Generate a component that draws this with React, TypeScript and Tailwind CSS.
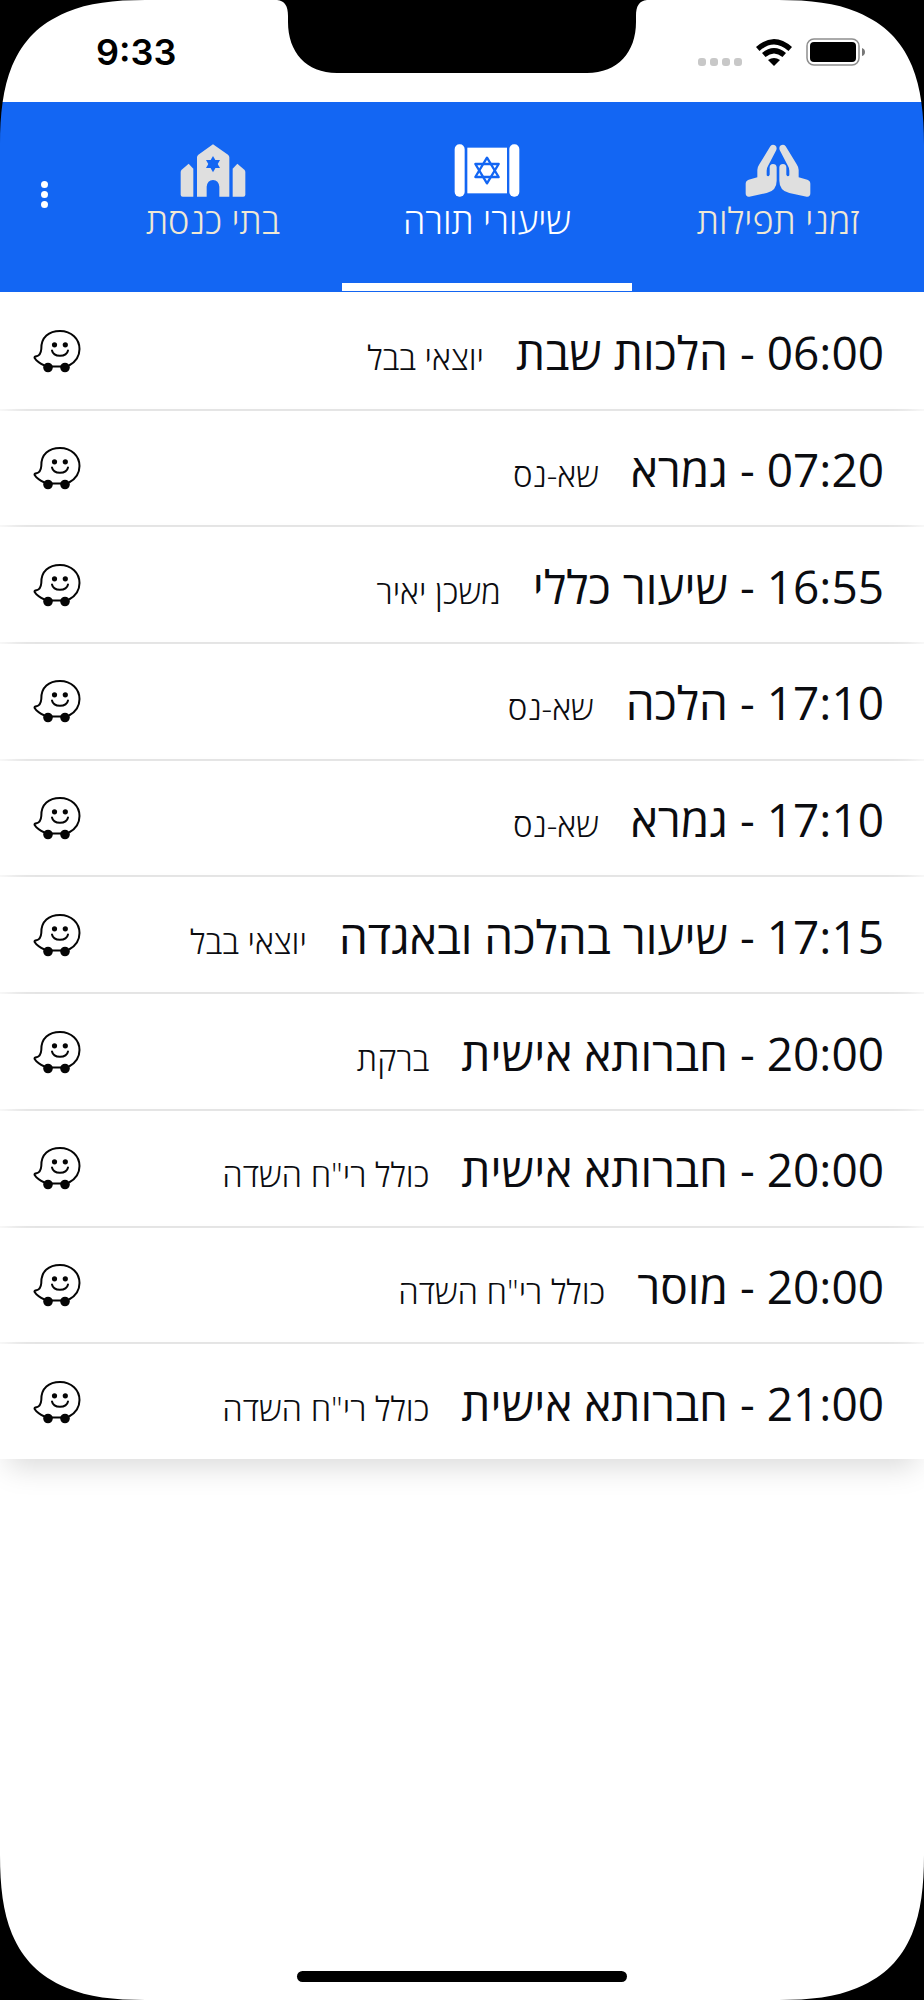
import { useState } from "react";

interface Lesson {
  time: string;
  title: string;
  place: string;
}

const lessons: Lesson[] = [
  { time: "06:00", title: "הלכות שבת", place: "יוצאי בבל" },
  { time: "07:20", title: "גמרא", place: "שא-נס" },
  { time: "16:55", title: "שיעור כללי", place: "משכן יאיר" },
  { time: "17:10", title: "הלכה", place: "שא-נס" },
  { time: "17:10", title: "גמרא", place: "שא-נס" },
  { time: "17:15", title: "שיעור בהלכה ובאגדה", place: "יוצאי בבל" },
  { time: "20:00", title: "חברותא אישית", place: "ברקת" },
  { time: "20:00", title: "חברותא אישית", place: 'כולל רי"ח השדה' },
  { time: "20:00", title: "מוסר", place: 'כולל רי"ח השדה' },
  { time: "21:00", title: "חברותא אישית", place: 'כולל רי"ח השדה' },
];

const handPath =
  "M268 49L235 103Q230 110 229 120V142L203 149Q194 152 194 161V190Q194 201 205 200L257 189Q287 182 287 152V112Q286 102 276 102Q266 103 266 112V134Q262 142 257 136V122Q257 114 261 108L286 60Q289 50 282 46Q274 42 268 49Z";

function PrayerIcon() {
  return (
    <svg viewBox="192 42 198 159" className="h-[53px] w-[66px] fill-[#dfdfdf]" aria-hidden="true">
      <path d={handPath} />
      <path d={handPath} transform="translate(582 0) scale(-1 1)" />
    </svg>
  );
}

function TorahIcon() {
  return (
    <svg viewBox="192 42 198 159" className="h-[53px] w-[66px] fill-white" aria-hidden="true">
      <rect x="194" y="43" width="30" height="157" rx="14" />
      <rect x="358" y="43" width="30" height="157" rx="14" />
      <rect x="232" y="53" width="119" height="137" />
      <g fill="none" stroke="#1366f3" strokeWidth="7" strokeLinejoin="round">
        <path d="M291 83L326 141H256Z" />
        <path d="M291 160L256 102H326Z" />
      </g>
    </svg>
  );
}

function SynagogueIcon() {
  return (
    <svg viewBox="150 42 198 159" className="h-[53px] w-[66px] fill-[#dfdfdf]" aria-hidden="true">
      <path d="M176 101L190 116V200H158Q152 200 152 194V126Q152 122 155 119Z" />
      <path d="M322 101L308 116V200H340Q346 200 346 194V126Q346 122 343 119Z" />
      <path d="M249 43L294 74Q298 77 298 82V200H268V170Q266 151 249 150Q232 151 230 170V200H201V82Q201 77 205 74Z" />
      <g className="fill-[#1366f3]">
        <path d="M249 78L270 114H228Z" />
        <path d="M249 127L228 90H270Z" />
      </g>
    </svg>
  );
}

function WazeIcon() {
  return (
    <svg viewBox="13 10 48 44" className="h-[44px] w-[48px]" fill="none" stroke="#050505" strokeWidth="2" aria-hidden="true">
      <path
        d="M24.5 46.5C20 44.500 16.500 42 14.600 39C14.200 38 15 37.500 16.500 37.200C20 36.500 21 34 21.300 30C21 18 29 11.900 40 11.900C51.500 11.900 59.500 20 59.500 30C59.500 37.500 55.500 43 49 46.500M32 47.500H41"
        strokeLinejoin="round"
      />
      <path d="M32 31.500C33.500 38.500 46.500 38.500 48 31.500" strokeLinecap="round" />
      <g fill="#050505" stroke="none">
        <circle cx="28" cy="48.500" r="4.800" />
        <circle cx="45" cy="48.500" r="4.800" />
        <circle cx="34.500" cy="25.800" r="2.600" />
        <circle cx="45.300" cy="25.800" r="2.600" />
      </g>
    </svg>
  );
}

const tabs = [
  { id: "prayers", label: "זמני תפילות", Icon: PrayerIcon },
  { id: "lessons", label: "שיעורי תורה", Icon: TorahIcon },
  { id: "synagogues", label: "בתי כנסת", Icon: SynagogueIcon },
];

const corners = [
  "top-0 left-0",
  "top-0 right-0 -scale-x-100",
  "bottom-0 left-0 -scale-y-100",
  "bottom-0 right-0 -scale-100",
];

// Black phone bezel that lies over the screen: rounded corners and the notch
function Bezel() {
  return (
    <div className="pointer-events-none absolute inset-0 z-20" aria-hidden="true">
      {corners.map((place) => (
        <svg key={place} viewBox="0 0 150 150" className={`absolute size-[150px] ${place}`}>
          <path d="M0 0H145C114 0 88 3 67 12C51 19 42 25 33 34C25 42 18 52 12 66C3 88 0 114 0 145Z" />
        </svg>
      ))}
      <svg viewBox="0 0 370 73" className="absolute top-0 left-1/2 h-[73px] w-[370px] -translate-x-1/2">
        <path d="M0 0C8 1 11 6 11 16V22C11 52 29 73 60 73H310C341 73 359 52 359 22V16C359 6 362 1 370 0Z" />
      </svg>
    </div>
  );
}

function StatusBar() {
  return (
    <div dir="ltr" className="flex h-[102px] items-center justify-between pt-0.5 pr-[58px] pl-[96px]">
      <span className="font-['Inter',sans-serif] text-[36px] leading-10 font-semibold text-black">9:33</span>
      <div className="flex items-center gap-3.5" aria-hidden="true">
        <div className="flex gap-1 pt-5">
          <i className="size-2 rounded-[3px] bg-[#c8c8c8]" />
          <i className="size-2 rounded-[3px] bg-[#c8c8c8]" />
          <i className="size-2 rounded-[3px] bg-[#c8c8c8]" />
          <i className="size-2 rounded-[3px] bg-[#c8c8c8]" />
        </div>
        <svg viewBox="0 0 36 27" className="h-[27px] w-[36px]">
          <path d="M0 8Q18-8 36 8L32.500 12Q18-1 3.500 12Z" />
          <path d="M6 14Q18 4 30 14L26.500 18Q18 11 9.500 18Z" />
          <path d="M12 21Q18 17 24 21L18 27Z" />
        </svg>
        <svg viewBox="0 0 60 28" className="h-[28px] w-[60px]">
          <rect x="1" y="1" width="52" height="26" rx="7" fill="none" stroke="#8e8e8e" strokeWidth="1.500" />
          <rect x="4" y="4" width="46" height="20" rx="4" />
          <path d="M56 10Q59 11 59 14Q59 17 56 18Z" fill="#777" />
        </svg>
      </div>
    </div>
  );
}

export default function App() {
  const [activeTab, setActiveTab] = useState("lessons");

  return (
    <div
      dir="rtl"
      className="relative flex min-h-screen flex-col overflow-hidden bg-white font-['Open_Sans','Noto_Sans',sans-serif]"
    >
      <Bezel />
      <StatusBar />

      {/* Tabs */}
      <header className="flex h-[190px] bg-[#1366f3] pb-px">
        <nav className="grid flex-1 grid-cols-[292fr_290fr_258fr]">
          {tabs.map(({ id, label, Icon }) => {
            const active = id === activeTab;
            return (
              <button
                key={id}
                type="button"
                aria-pressed={active}
                onClick={() => setActiveTab(id)}
                className={`flex flex-col items-center border-b-8 pt-[42px] ${
                  active ? "border-white text-white" : "border-transparent text-[#f0e8d4]"
                }`}
              >
                <Icon />
                <span className="text-[36px] leading-[48px] font-light">{label}</span>
              </button>
            );
          })}
        </nav>
        <button type="button" aria-label="תפריט" className="flex w-[84px] flex-col items-center justify-center gap-[3px] pb-1 pl-1">
          <i className="size-[7px] rounded-full bg-white" />
          <i className="size-[7px] rounded-full bg-white" />
          <i className="size-[7px] rounded-full bg-white" />
        </button>
      </header>

      {/* Lessons */}
      <ul className="mt-0.5 grid h-[1165px] auto-rows-fr gap-0.5 text-[#0b0c10]">
        {lessons.map((lesson, i) => (
          <li
            key={i}
            className="flex items-center justify-between bg-white pr-[40px] pl-[33px] shadow-[0_16px_28px_-8px_rgba(0,0,0,0.15)]"
          >
            <p className="flex items-baseline gap-8 pt-2">
              <span className="text-[46px] leading-[56px]">
                {lesson.time} - {lesson.title}
              </span>
              <span className="text-[33px] leading-[56px] font-light">{lesson.place}</span>
            </p>
            <a href="#waze" aria-label={`ניווט אל ${lesson.place}`}>
              <WazeIcon />
            </a>
          </li>
        ))}
      </ul>

      <div className="mx-auto mt-auto mb-[18px] h-[11px] w-[330px] rounded-full bg-black" />
    </div>
  );
}
